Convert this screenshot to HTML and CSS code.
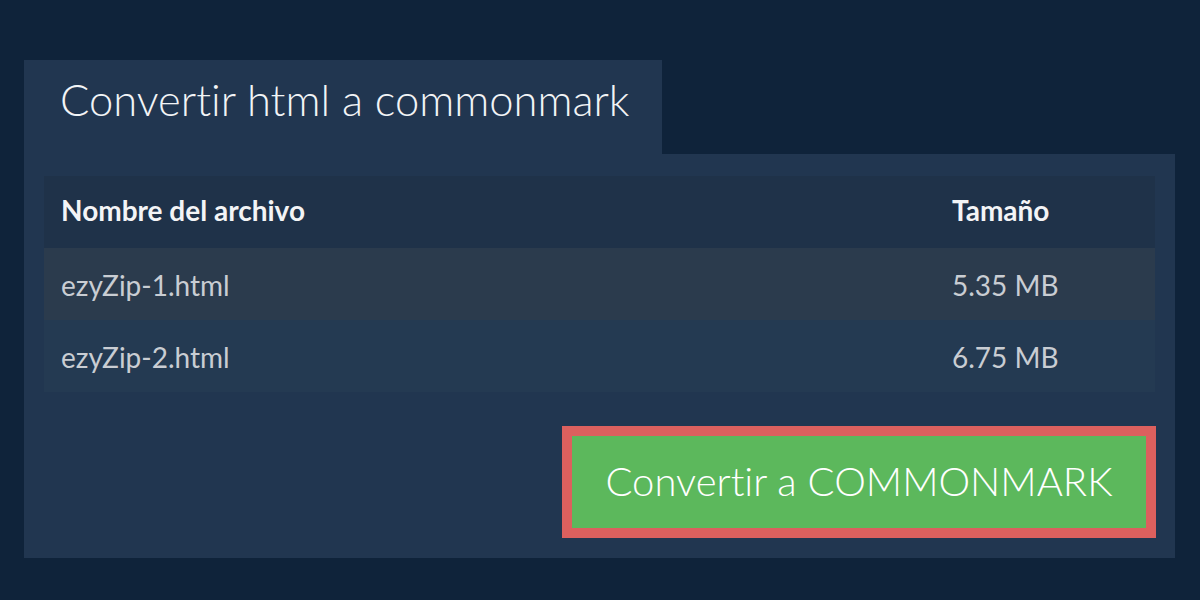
FILE: index.html
```html
<!DOCTYPE html>
<html lang="es">
<head>
<meta charset="utf-8">
<title>Convertir html a commonmark</title>
<link rel="stylesheet" href="styles.css">
</head>
<body>
<main class="wrap">
  <div class="tab"><h1 class="title">Convertir html a commonmark</h1></div>
  <section class="panel">
    <div class="files">
      <div class="row head">
        <div class="cell">Nombre del archivo</div>
        <div class="cell">Tamaño</div>
      </div>
      <div class="row odd">
        <div class="cell">ezyZip-1.html</div>
        <div class="cell">5.35 MB</div>
      </div>
      <div class="row even">
        <div class="cell">ezyZip-2.html</div>
        <div class="cell">6.75 MB</div>
      </div>
    </div>
    <div class="actions">
      <button class="convert" type="button">Convertir a COMMONMARK</button>
    </div>
  </section>
</main>
</body>
</html>
```

FILE: styles.css
```css
html, body {
  margin: 0;
  padding: 0;
  background: #0f233a;
  font-family: Lato, "Noto Sans", sans-serif;
  font-variant-ligatures: none;
}

.wrap {
  padding: 60px 25px 43px 24px;
  display: flex;
  flex-direction: column;
  align-items: flex-start;
}

.tab {
  width: 638px;
  height: 94px;
  box-sizing: border-box;
  background: #213650;
  padding: 0 0 0 36px;
  display: flex;
  align-items: center;
}

.title {
  margin: 0 0 14px 0;
  font-size: 43.5px;
  font-weight: 300;
  color: #f2f4f6;
  line-height: 1;
  white-space: nowrap;
}

.panel {
  align-self: stretch;
  background: #213650;
  padding: 22px 20px 20px 20px;
}

.files {
  display: flex;
  flex-direction: column;
}

.row {
  display: grid;
  grid-template-columns: 891px 1fr;
  box-sizing: border-box;
  height: 72px;
  align-items: center;
  font-size: 28px;
  padding-top: 2px;
}

.row .cell {
  padding: 0 17px;
}

.head {
  background: #1f3249;
  color: #f3f4f6;
  font-weight: 700;
  padding-top: 0;
  padding-bottom: 4px;
}

.odd {
  background: #2b3b4d;
  color: #c9cdd3;
}

.even {
  background: #243a52;
  color: #c9cdd3;
}

.actions {
  display: flex;
  justify-content: flex-end;
  margin-top: 34px;
}

.convert {
  width: 594px;
  height: 112px;
  margin-right: -1px;
  background: #5cb85c;
  border: 10px solid #dc605e;
  color: #ffffff;
  font-family: Lato, "Noto Sans", sans-serif;
  font-variant-ligatures: none;
  font-size: 40px;
  font-weight: 300;
  padding: 0 0 3px 0;
  cursor: pointer;
}
```
